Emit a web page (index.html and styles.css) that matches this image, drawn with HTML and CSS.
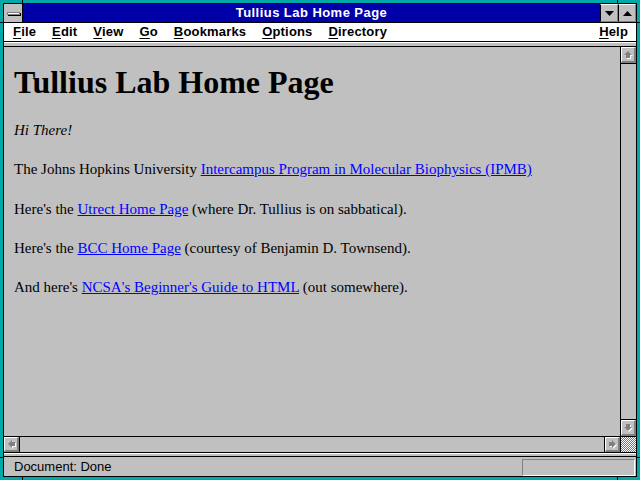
FILE: index.html
```html
<!DOCTYPE html>
<html lang="en">
<head>
    <meta charset="UTF-8">
    <title>Tullius Lab Home Page</title>
    <link rel="stylesheet" href="styles.css">
</head>
<body>
    <div class="screen">
        <div class="grip grip-top-left"></div>
        <div class="grip grip-top-right"></div>
        <div class="grip grip-bottom-left"></div>
        <div class="grip grip-bottom-right"></div>
        <div class="grip grip-left-top"></div>
        <div class="grip grip-left-bottom"></div>
        <div class="grip grip-right-top"></div>
        <div class="grip grip-right-bottom"></div>

        <div class="window">
            <div class="titlebar">
                <div class="sysmenu"><span class="sysbar"></span></div>
                <div class="caption">Tullius Lab Home Page</div>
                <div class="caption-btn">
                    <svg width="9" height="5" viewBox="0 0 9 5"><polygon points="0,0 9,0 4.5,5" fill="#000"/></svg>
                </div>
                <div class="caption-btn">
                    <svg width="9" height="5" viewBox="0 0 9 5"><polygon points="0,5 9,5 4.5,0" fill="#000"/></svg>
                </div>
            </div>

            <div class="menubar">
                <span class="menu-item"><u>F</u>ile</span>
                <span class="menu-item"><u>E</u>dit</span>
                <span class="menu-item"><u>V</u>iew</span>
                <span class="menu-item"><u>G</u>o</span>
                <span class="menu-item"><u>B</u>ookmarks</span>
                <span class="menu-item"><u>O</u>ptions</span>
                <span class="menu-item"><u>D</u>irectory</span>
                <span class="menu-item help"><u>H</u>elp</span>
            </div>

            <div class="toolstrip"></div>

            <div class="main">
                <div class="content">
                    <h1>Tullius Lab Home Page</h1>
                    <p><i>Hi There!</i></p>
                    <p>The Johns Hopkins University <a href="#">Intercampus Program in Molecular Biophysics (IPMB) </a></p>
                    <p>Here's the <a href="#">Utrect Home Page</a> (where Dr. Tullius is on sabbatical).</p>
                    <p>Here's the <a href="#">BCC Home Page</a> (courtesy of Benjamin D. Townsend).</p>
                    <p>And here's <a href="#">NCSA's Beginner's Guide to HTML</a> (out somewhere).</p>
                </div>
                <div class="vscroll">
                    <div class="sb-btn sb-up">
                        <svg width="11" height="11" viewBox="0 0 11 11">
                            <polygon points="6,3 10,7 8,7 8,10 4,10 4,7 2,7" fill="#fff"/>
                            <polygon points="5,2 9,6 7,6 7,9 3,9 3,6 1,6" fill="#808080"/>
                        </svg>
                    </div>
                    <div class="sb-track"></div>
                    <div class="sb-btn sb-down">
                        <svg width="11" height="11" viewBox="0 0 11 11">
                            <polygon points="6,10 10,6 8,6 8,3 4,3 4,6 2,6" fill="#fff"/>
                            <polygon points="5,9 9,5 7,5 7,2 3,2 3,5 1,5" fill="#808080"/>
                        </svg>
                    </div>
                </div>
            </div>

            <div class="hscroll">
                <div class="sb-btn sb-left">
                    <svg width="11" height="11" viewBox="0 0 11 11">
                        <polygon points="3,6 7,2 7,4 10,4 10,8 7,8 7,10" fill="#fff"/>
                        <polygon points="2,5 6,1 6,3 9,3 9,7 6,7 6,9" fill="#808080"/>
                    </svg>
                </div>
                <div class="sb-track"></div>
                <div class="sb-btn sb-right">
                    <svg width="11" height="11" viewBox="0 0 11 11">
                        <polygon points="10,6 6,2 6,4 3,4 3,8 6,8 6,10" fill="#fff"/>
                        <polygon points="9,5 5,1 5,3 2,3 2,7 5,7 5,9" fill="#808080"/>
                    </svg>
                </div>
                <div class="sb-corner"></div>
            </div>

            <div class="statusstrip"></div>

            <div class="statusbar">
                <span class="status-text">Document: Done</span>
                <span class="status-box"></span>
            </div>
        </div>
    </div>
</body>
</html>
```

FILE: styles.css
```css
body {
    margin: 0;
    background-color: #00a8a8;
}
.screen {
    position: relative;
    width: 640px;
    height: 480px;
    padding: 3px;
    box-sizing: border-box;
    background-color: #00a8a8;
}
.grip {
    position: absolute;
    background-color: #000;
}
.grip-top-left { left: 22px; top: 0; width: 1px; height: 3px; }
.grip-top-right { left: 617px; top: 0; width: 1px; height: 3px; }
.grip-bottom-left { left: 22px; bottom: 0; width: 1px; height: 3px; }
.grip-bottom-right { left: 617px; bottom: 0; width: 1px; height: 3px; }
.grip-left-top { left: 0; top: 22px; width: 3px; height: 1px; }
.grip-left-bottom { left: 0; top: 457px; width: 3px; height: 1px; }
.grip-right-top { right: 0; top: 22px; width: 3px; height: 1px; }
.grip-right-bottom { right: 0; top: 457px; width: 3px; height: 1px; }

.window {
    height: 100%;
    border: 1px solid #000;
    box-sizing: border-box;
    display: flex;
    flex-direction: column;
    background-color: #c0c0c0;
    font-family: "Liberation Sans", Arial, sans-serif;
    font-size: 13px;
}
.titlebar {
    display: flex;
    height: 18px;
    border-bottom: 1px solid #000;
    flex-shrink: 0;
}
.sysmenu {
    width: 18px;
    border-right: 1px solid #000;
    background-color: #c0c0c0;
    display: flex;
    align-items: center;
    justify-content: center;
}
.sysbar {
    width: 11px;
    height: 1px;
    background-color: #fff;
    border: 1px solid #808080;
    box-shadow: 1px 1px 0 #000;
}
.caption {
    flex: 1;
    background-color: #0000a8;
    color: white;
    font-weight: bold;
    text-align: center;
    line-height: 18px;
    letter-spacing: 0.45px;
}
.caption-btn {
    width: 16px;
    border-left: 1px solid #000;
    border-top: 1px solid #fff;
    border-right: 1px solid #808080;
    border-bottom: 1px solid #808080;
    box-sizing: content-box;
    height: 16px;
    display: flex;
    align-items: center;
    justify-content: center;
    background-color: #c0c0c0;
}
.menubar {
    display: flex;
    height: 18px;
    line-height: 18px;
    background-color: white;
    border-bottom: 1px solid #000;
    padding-left: 1px;
    font-weight: bold;
    letter-spacing: 0.17px;
    flex-shrink: 0;
}
.menu-item {
    padding: 0 8px;
}
.menu-item u {
    text-underline-offset: 2px;
}
.help {
    margin-left: auto;
}
.toolstrip {
    height: 3px;
    border-top: 1px solid #fff;
    border-bottom: 1px solid #000;
    background-color: #c0c0c0;
    flex-shrink: 0;
}
.main {
    display: flex;
    height: 389px;
    flex-shrink: 0;
}
.content {
    flex: 1;
    padding: 17px 10px 0;
    border-right: 1px solid #000;
    font-family: "Liberation Serif", "Times New Roman", serif;
    font-size: 15px;
    overflow: hidden;
}
.content h1 {
    font-size: 32px;
    line-height: 37px;
    margin: 0 0 20px;
}
.content p {
    line-height: 19px;
    margin: 0 0 20.3px;
}
.content a {
    color: #0000ff;
}
.vscroll {
    width: 15px;
    display: flex;
    flex-direction: column;
}
.sb-track {
    flex: 1;
    background-color: #c0c0c0;
}
.sb-btn {
    box-sizing: border-box;
    width: 15px;
    height: 15px;
    background-color: #c0c0c0;
    border-top: 1px solid #fff;
    border-left: 1px solid #fff;
    border-right: 2px solid #808080;
    border-bottom: 2px solid #808080;
    display: flex;
    align-items: center;
    justify-content: center;
    flex-shrink: 0;
}
.sb-up {
    height: 16px;
    box-shadow: 0 1px 0 #000;
    margin-bottom: 1px;
}
.sb-down {
    height: 16px;
    box-shadow: 0 -1px 0 #000;
    margin-top: 1px;
}
.hscroll {
    display: flex;
    height: 15px;
    border-top: 1px solid #000;
    border-bottom: 1px solid #000;
    flex-shrink: 0;
}
.sb-left {
    width: 15px;
    margin-right: 1px;
    box-shadow: 1px 0 0 #000;
}
.sb-right {
    width: 15px;
    margin-left: 1px;
    box-shadow: -1px 0 0 #000;
}
.sb-corner {
    width: 15px;
    border-left: 1px solid #000;
    background: repeating-conic-gradient(#00a8a8 0 25%, #fff 0 50%) 0 0 / 2px 2px;
}
.statusstrip {
    height: 2px;
    border-top: 1px solid #fff;
    border-bottom: 1px solid #000;
    background-color: #c0c0c0;
    flex-shrink: 0;
}
.statusbar {
    flex: 1;
    display: flex;
    align-items: flex-end;
    justify-content: space-between;
    padding: 0 1px 0 10px;
}
.status-text {
    line-height: 19px;
}
.status-box {
    width: 113px;
    height: 17px;
    box-sizing: border-box;
    border-top: 1px solid #808080;
    border-left: 1px solid #808080;
    border-right: 1px solid #fff;
    border-bottom: 1px solid #fff;
}
```
